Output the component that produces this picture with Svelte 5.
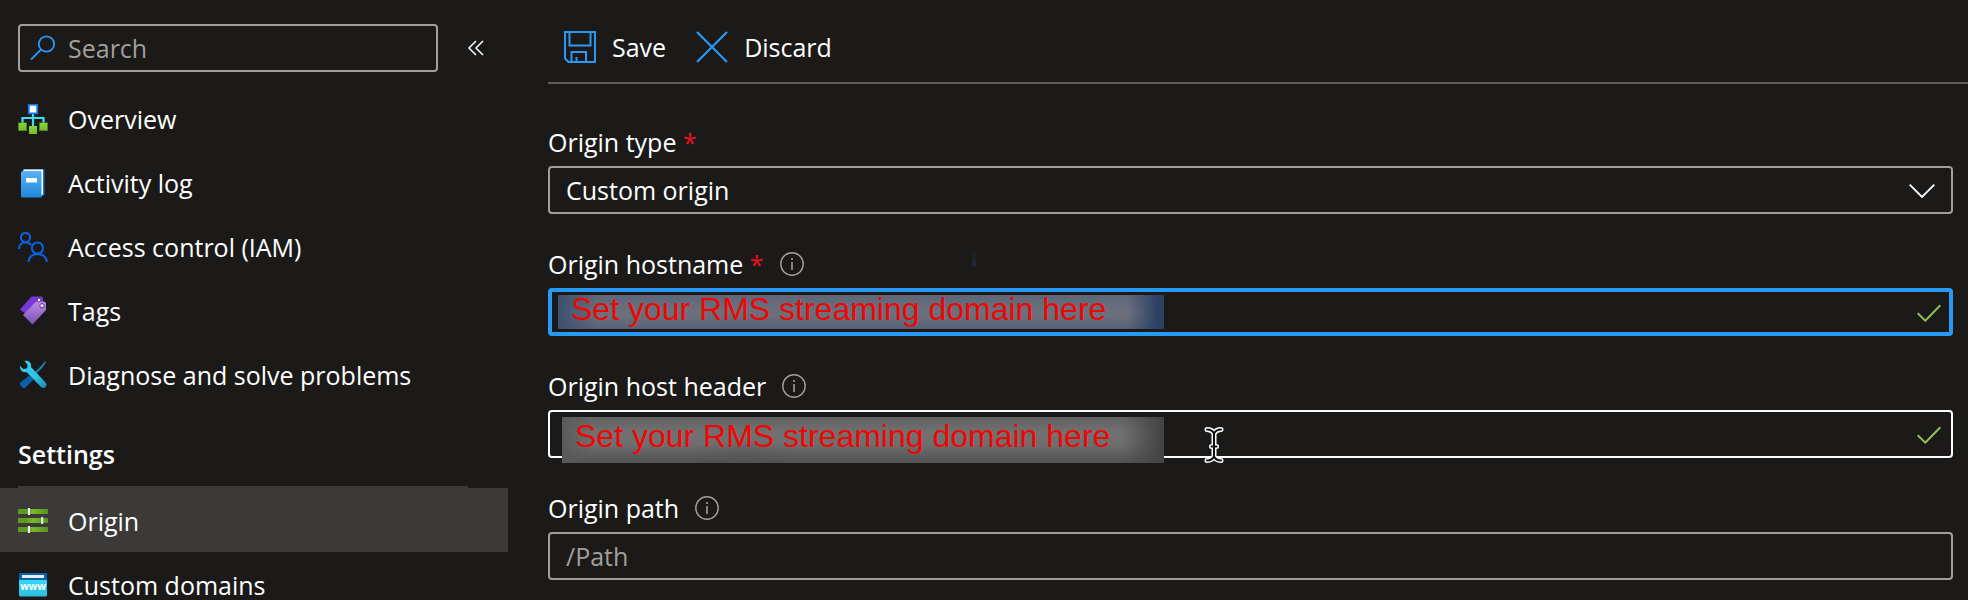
<script>
  const primary = [
    { id: 'overview', label: 'Overview' },
    { id: 'activity', label: 'Activity log' },
    { id: 'access', label: 'Access control (IAM)' },
    { id: 'tags', label: 'Tags' },
    { id: 'diagnose', label: 'Diagnose and solve problems' }
  ];
  const settings = [
    { id: 'origin', label: 'Origin' },
    { id: 'domains', label: 'Custom domains' }
  ];
  const active = 'origin';
  const note = 'Set your RMS streaming domain here';
</script>

{#snippet icon(id)}
  <svg class="nav-icon" viewBox="0 0 30 30" aria-hidden="true">
    {#if id === 'overview'}
      <path d="M15 9v14M4.500 19v-5h21v5" fill="none" stroke="#45dcf2" stroke-width="2.200" />
      <rect x="10.800" y="0.800" width="8.400" height="8.600" fill="#fff" stroke="#0f7ae0" stroke-width="1.800" />
      <rect x="0" y="18.500" width="9" height="8.500" fill="#4f8420" />
      <rect x="21" y="18.500" width="9" height="8.500" fill="#4f8420" />
      <rect x="1" y="19" width="7" height="7" fill="url(#green)" />
      <rect x="22" y="19" width="7" height="7" fill="url(#green)" />
      <rect x="11" y="22" width="8" height="8" fill="url(#green)" />
    {:else if id === 'activity'}
      <path d="M5 1h20.500q1 0 1 1v24q0 1.500-1.500 2H5z" fill="#1b6fb8" />
      <path d="M5.500 2.500l1-1h18.500v24.500l-1.500 1.500H5.500z" fill="#fff" />
      <path d="M5 3h17.500q1 0 1 1v25.500H4.500q-1.500 0-1.500-1.500V5q0-2 2-2z" fill="url(#book)" />
      <rect x="8" y="10" width="11" height="4.500" fill="#fff" />
    {:else if id === 'access'}
      <g fill="none" stroke="#0a62de" stroke-width="2">
        <circle cx="7.500" cy="5.500" r="4.600" />
        <path d="M1 17C1 12.500 4 10.400 7.500 10.400c2.600 0 4.600 1 5.700 2.800" />
        <circle cx="19.500" cy="16" r="5.600" />
        <path d="M10.500 30c.7-5.300 4.400-8 9-8s8.500 2.800 9.500 8" />
      </g>
    {:else if id === 'tags'}
      <path d="M13.500 0.500L23 0.500q2 0 2 2v8L9.500 19.500L2 13.500z" fill="#7638d8" />
      <path d="M18 5.500h7.500q2.500 0 2.500 2.500v6L14.500 28.500L5 19z" fill="url(#tag)" />
      <circle cx="21" cy="4" r="1.900" fill="#fff" stroke="#54249c" />
      <circle cx="24" cy="9.700" r="2.100" fill="#fff" stroke="#54249c" />
    {:else if id === 'diagnose'}
      <path d="M27.500 1l.5 1.500-3.500 5-7 7-1.500-1.500 7-7z" fill="#1d80ad" />
      <path d="M11.500 15.500l4 4-8 8q-1.500 1-3 0l-2-2q-1-1.500 0-3z" fill="#0a60ae" />
      <path d="M6.500 1c4-1.300 7.500 2 6.500 6l14.500 15.500q2 2.500 0 4.500t-4.500 0L8.500 12c-4 1-7-2-6.500-6l3.500 3.200 3.500-1 .7-3.200z" fill="url(#wrench)" />
    {:else if id === 'origin'}
      {#each [3, 12, 21] as y}
        <rect x="0" {y} width="30" height="5" rx="0.600" fill="url(#bar)" />
      {/each}
      <g fill="#f2f2f2">
        <rect x="10" y="2" width="2" height="7" />
        <rect x="23.200" y="11" width="2" height="7" />
        <rect x="10" y="20" width="2" height="7" />
      </g>
    {:else}
      <path d="M1 4q0-1 1-1h26q1 0 1 1v6H1z" fill="#0860b0" />
      <path d="M1 10h28v15q0 1.500-1.500 1.500h-25Q1 26.500 1 25z" fill="url(#web)" />
      <rect x="4" y="5" width="22" height="3" fill="#e9eff8" />
      <text x="15" y="20" text-anchor="middle" class="www">www</text>
    {/if}
  </svg>
{/snippet}

{#snippet info(name)}
  <button class="info" type="button" aria-label={name}>
    <svg width="24" height="24" viewBox="0 0 24 24" aria-hidden="true">
      <circle cx="12" cy="12" r="11.200" fill="none" stroke="#a19f9d" stroke-width="1.400" />
      <path d="M12 10v8M12 6v2" stroke="#a19f9d" stroke-width="1.600" />
    </svg>
  </button>
{/snippet}

{#snippet check()}
  <svg class="check" width="24" height="18" viewBox="0 0 24 18" aria-hidden="true">
    <path d="M.7 9.300l7.600 7.300L23.300 1.200" fill="none" stroke="#92c353" stroke-width="2" />
  </svg>
{/snippet}

<svg class="defs" width="0" height="0" aria-hidden="true">
  <defs>
    <linearGradient id="green" x2="0" y2="1"><stop stop-color="#86d633" /><stop offset="1" stop-color="#76bc2d" /></linearGradient>
    <linearGradient id="book" x2="0" y2="1"><stop stop-color="#5ab1f3" /><stop offset="1" stop-color="#1f88d9" /></linearGradient>
    <linearGradient id="tag" x2="0" y2="1"><stop stop-color="#b88ee2" /><stop offset="1" stop-color="#7950b8" /></linearGradient>
    <linearGradient id="wrench" x2="1" y2="1"><stop stop-color="#32d4f5" /><stop offset="0.600" stop-color="#2fc4e8" /><stop offset="1" stop-color="#1b88b0" /></linearGradient>
    <linearGradient id="bar"><stop stop-color="#5e9a20" /><stop offset="0.250" stop-color="#5e9a20" /><stop offset="0.500" stop-color="#78ba2c" /><stop offset="1" stop-color="#5a9220" /></linearGradient>
    <linearGradient id="web" x2="0" y2="1"><stop stop-color="#30d8f8" /><stop offset="1" stop-color="#2cbedd" /></linearGradient>
  </defs>
</svg>

<div class="page">
  <aside>
    <div class="search-row">
      <label class="search">
        <svg width="26" height="26" viewBox="0 0 26 26" aria-hidden="true">
          <circle cx="16.500" cy="9" r="7.700" fill="none" stroke="#2899f5" stroke-width="1.800" />
          <path d="M11 14.500L1 24.500" stroke="#2899f5" stroke-width="1.800" />
        </svg>
        <input type="search" placeholder="Search" aria-label="Search" />
      </label>
      <button class="collapse" type="button" aria-label="Collapse menu">
        <svg width="18" height="16" viewBox="0 0 18 16" aria-hidden="true">
          <path d="M9 1L2 8l7 7M16 1L9 8l7 7" fill="none" stroke="#fff" stroke-width="1.500" />
        </svg>
      </button>
    </div>
    <nav>
      {#each primary as item}
        <a href="#{item.id}">{@render icon(item.id)}<span>{item.label}</span></a>
      {/each}
      <h2>Settings</h2>
      <div class="group">
        {#each settings as item}
          <a href="#{item.id}" class:active={item.id === active}>{@render icon(item.id)}<span>{item.label}</span></a>
        {/each}
      </div>
    </nav>
  </aside>

  <main>
    <div class="toolbar">
      <button type="button">
        <svg width="32" height="32" viewBox="0 0 32 32" aria-hidden="true">
          <g fill="none" stroke="#2899f5" stroke-width="2">
            <path d="M1 1h30v30H4.500L1 27.500z" />
            <path d="M5.500 1v13.500h21V1" />
            <path d="M7.500 31V21h14.500v10M12.500 31v-5" />
          </g>
        </svg>
        Save
      </button>
      <button type="button">
        <svg width="32" height="32" viewBox="0 0 32 32" aria-hidden="true">
          <path d="M1 1l30 30M31 1L1 31" stroke="#2899f5" stroke-width="2.200" />
        </svg>
        Discard
      </button>
    </div>

    <form>
      <div class="field">
        <div class="caption"><label for="type">Origin type <b>*</b></label></div>
        <div class="control">
          <select id="type"><option>Custom origin</option></select>
          <svg class="chevron" width="26" height="14" viewBox="0 0 26 14" aria-hidden="true">
            <path d="M.7.700L13 13 25.300.700" fill="none" stroke="#fff" stroke-width="1.800" />
          </svg>
        </div>
      </div>
      <div class="field">
        <div class="caption">
          <label for="hostname">Origin hostname <b>*</b></label>{@render info('About origin hostname')}
          <i class="tick"></i>
        </div>
        <div class="control">
          <input id="hostname" class="focused" type="text" />
          <span class="note blue">{note}</span>
          {@render check()}
        </div>
      </div>
      <div class="field">
        <div class="caption">
          <label for="header">Origin host header</label>{@render info('About origin host header')}
        </div>
        <div class="control">
          <input id="header" class="hovered" type="text" />
          <span class="note grey">{note}</span>
          {@render check()}
          <svg class="cursor" width="20" height="38" viewBox="0 0 20 38" aria-hidden="true">
            <g fill="none" stroke-linecap="round" stroke-linejoin="round">
              <path d="M3 3.500q5 0 7 4 2-4 7-4M3 34.500q5 0 7-4 2 4 7 4M10 7v24M7.500 20.500h5" stroke="#fff" stroke-width="5" />
              <path d="M3 3.500q5 0 7 4 2-4 7-4M3 34.500q5 0 7-4 2 4 7 4M10 7v24M7.500 20.500h5" stroke="#111" stroke-width="2" />
            </g>
          </svg>
        </div>
      </div>
      <div class="field">
        <div class="caption">
          <label for="path">Origin path</label>{@render info('About origin path')}
        </div>
        <div class="control">
          <input id="path" type="text" placeholder="/Path" />
        </div>
      </div>
    </form>
  </main>
</div>

<style>
  :global(body) {
    margin: 0;
    background: #1b1a19;
    overflow: hidden;
  }
  .defs {
    position: absolute;
  }
  .page {
    display: flex;
    height: 100vh;
    overflow: hidden;
    color: #fff;
    font: 25px/32px "Open Sans", "Noto Sans", sans-serif;
  }
  * {
    box-sizing: border-box;
  }
  svg {
    display: block;
    flex: none;
  }
  input,
  select,
  button {
    font: inherit;
    color: inherit;
    background: none;
    border: 0;
    padding: 0;
    margin: 0;
    outline: 0;
  }
  ::placeholder {
    color: #a19f9d;
    opacity: 1;
  }
  aside {
    flex: none;
    width: 508px;
    padding-top: 24px;
  }
  .search-row {
    display: flex;
    align-items: center;
    gap: 29px;
    padding: 0 21px 0 18px;
    margin-bottom: 15px;
  }
  .search {
    flex: 1;
    display: flex;
    align-items: center;
    gap: 12px;
    height: 48px;
    padding: 0 10px;
    border: 2px solid #a19f9d;
    border-radius: 4px;
  }
  .search input {
    flex: 1;
    min-width: 0;
  }
  .collapse {
    width: 20px;
  }
  nav a {
    display: flex;
    align-items: center;
    gap: 20px;
    height: 64px;
    padding: 0 18px;
    color: inherit;
    text-decoration: none;
  }
  .group a {
    padding-top: 2px;
  }
  nav a.active {
    background: #3b3a39;
  }
  .nav-icon {
    width: 30px;
    height: 30px;
  }
  .www {
    font: 700 10px "Open Sans", sans-serif;
    fill: #fff;
  }
  h2 {
    height: 81px;
    margin: 0 40px 0 18px;
    padding-top: 31px;
    border-bottom: 2px solid #3b3a39;
    font-size: 25px;
    line-height: 32px;
    font-weight: 600;
  }
  main {
    flex: 1;
    min-width: 0;
    padding-left: 40px;
  }
  .toolbar {
    display: flex;
    gap: 30px;
    height: 84px;
    padding: 11px 16px 0;
    border-bottom: 2px solid #605e5c;
  }
  .toolbar button {
    display: flex;
    align-items: center;
    gap: 16px;
  }
  form {
    padding: 39px 15px 0 0;
  }
  .field {
    margin-bottom: 31px;
  }
  .caption {
    position: relative;
    display: flex;
    align-items: center;
    gap: 16px;
    height: 43px;
    padding-bottom: 6px;
  }
  .caption b {
    color: #e81123;
    font-weight: 400;
  }
  .info {
    width: 24px;
  }
  .tick {
    position: absolute;
    left: 424px;
    top: 2px;
    width: 4px;
    height: 20px;
    background: linear-gradient(#1b1a19, #222838);
  }
  .control {
    position: relative;
  }
  .control input,
  .control select {
    display: block;
    width: 100%;
    height: 48px;
    padding: 0 16px;
    border: 2px solid #a19f9d;
    border-radius: 4px;
    appearance: none;
  }
  .control .focused {
    border: 4px solid #2899f5;
  }
  .control .hovered {
    border-color: #fff;
  }
  .chevron {
    position: absolute;
    right: 18px;
    top: 18px;
    pointer-events: none;
  }
  .check {
    position: absolute;
    right: 12px;
    top: 16px;
  }
  .note {
    position: absolute;
    color: #f00505;
    font: 32px/32px "Liberation Sans", Arial, sans-serif;
    white-space: nowrap;
  }
  .blue {
    left: 10px;
    top: 7px;
    width: 606px;
    height: 34px;
    padding-left: 13px;
    line-height: 28px;
    background:
      linear-gradient(90deg, #3d4f6e 0, transparent 40px, transparent 570px, #2a4164 600px),
      radial-gradient(ellipse 60px 18px at 180px 100%, #56627a88, transparent),
      linear-gradient(#5d6679, #6b707c 45%, #6a6f7b 65%, #566178);
  }
  .grey {
    left: 14px;
    top: 7px;
    width: 602px;
    height: 46px;
    padding-left: 13px;
    line-height: 38px;
    background:
      linear-gradient(90deg, #5a5a5a 0, transparent 30px, transparent 560px, #454545 598px),
      radial-gradient(ellipse 60px 24px at 180px 100%, #50505088, transparent),
      linear-gradient(#626262, #717171 35%, #6e6e6e 60%, #515151);
  }
  .cursor {
    position: absolute;
    left: 656px;
    top: 16px;
  }
</style>
